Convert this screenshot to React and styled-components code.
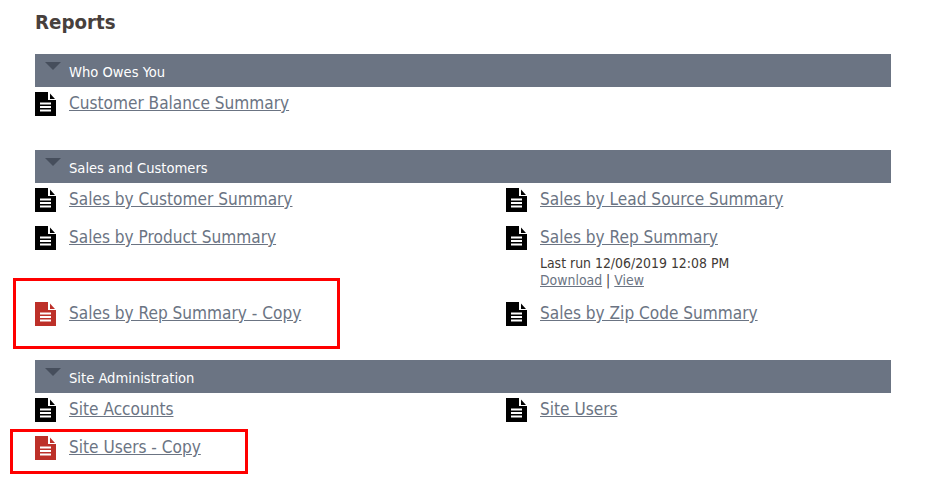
import React from "react";
import styled, { createGlobalStyle } from "styled-components";

const Global = createGlobalStyle`
  html, body { margin: 0; padding: 0; background: #fff; }
  body { font-family: "DejaVu Sans", "Noto Sans", sans-serif; font-stretch: condensed; }
`;

const Page = styled.div`
  position: relative;
  width: 941px;
  height: 484px;
  overflow: hidden;
  padding: 9px 50px 0 35px;
  box-sizing: border-box;
`;

const Title = styled.h1`
  margin: 0 0 19px;
  height: 26px;
  font-size: 20.3px;
  line-height: 26px;
  font-weight: 700;
  color: #47403c;
`;

const Section = styled.section`
  margin-bottom: 25px;
`;

const SectionBar = styled.div`
  position: relative;
  height: 33px;
  background: #6b7483;
  color: #fff;
  font-size: 14.6px;
  line-height: 36px;
  padding-left: 34px;
`;

const Caret = styled.span`
  position: absolute;
  left: 10px;
  top: 8px;
  width: 0;
  height: 0;
  border-left: 8px solid transparent;
  border-right: 8px solid transparent;
  border-top: 8px solid #464e5c;
`;

const Grid = styled.div`
  display: grid;
  grid-template-columns: 471px 385px;
`;

const Item = styled.div`
  display: flex;
  gap: 13px;
  padding: 5px 0 9px;
`;

const IconWrap = styled.svg`
  flex: none;
  width: 21px;
  height: 24px;
`;

const Body = styled.div`
  display: flex;
  flex-direction: column;
`;

const ReportLink = styled.a`
  font-size: 17.1px;
  line-height: 23px;
  color: #6b7483;
  text-decoration: underline;
`;

const Meta = styled.div`
  margin-top: 6px;
  margin-bottom: -1px;
  font-size: 13.9px;
  line-height: 17px;
  color: #3f3a36;
`;

const MetaLink = styled.a`
  color: #6b7483;
  text-decoration: underline;
`;

const Callout = styled.div`
  position: absolute;
  box-sizing: border-box;
  border: 3px solid #ff0000;
  left: ${(p) => p.$x}px;
  top: ${(p) => p.$y}px;
  width: ${(p) => p.$w}px;
  height: ${(p) => p.$h}px;
`;

const DocIcon = ({ red }) => (
  <IconWrap viewBox="0 0 21 24">
    <path d="M0 0H13L21 8V24H0Z" fill={red ? "#bd3029" : "#000"} />
    <path d="M13 0H15L21 6V8H13Z" fill="#fff" />
    <path d="M15 1.5L20 7H15Z" fill={red ? "#bd3029" : "#000"} />
    <path d="M5 10.5H16V12.5H5ZM5 14H16V16H5ZM5 17.5H16V19.5H5Z" fill="#fff" />
  </IconWrap>
);

const Report = ({ name, red, children }) => (
  <Item>
    <DocIcon red={red} />
    <Body>
      <ReportLink>{name}</ReportLink>
      {children}
    </Body>
  </Item>
);

const Bar = ({ children }) => (
  <SectionBar>
    <Caret />
    {children}
  </SectionBar>
);

export default function App() {
  return (
    <Page>
      <Global />
      <Title>Reports</Title>
      <Section>
        <Bar>Who Owes You</Bar>
        <Grid>
          <Report name="Customer Balance Summary" />
        </Grid>
      </Section>
      <Section>
        <Bar>Sales and Customers</Bar>
        <Grid>
          <Report name="Sales by Customer Summary" />
          <Report name="Sales by Lead Source Summary" />
          <Report name="Sales by Product Summary" />
          <Report name="Sales by Rep Summary">
            <Meta>
              Last run 12/06/2019 12:08 PM
              <br />
              <MetaLink>Download</MetaLink> | <MetaLink>View</MetaLink>
            </Meta>
          </Report>
          <Report name="Sales by Rep Summary - Copy" red />
          <Report name="Sales by Zip Code Summary" />
        </Grid>
      </Section>
      <Section>
        <Bar>Site Administration</Bar>
        <Grid>
          <Report name="Site Accounts" />
          <Report name="Site Users" />
          <Report name="Site Users - Copy" red />
        </Grid>
      </Section>
      <Callout $x={13} $y={278} $w={327} $h={71} />
      <Callout $x={10} $y={429} $w={238} $h={45} />
    </Page>
  );
}
